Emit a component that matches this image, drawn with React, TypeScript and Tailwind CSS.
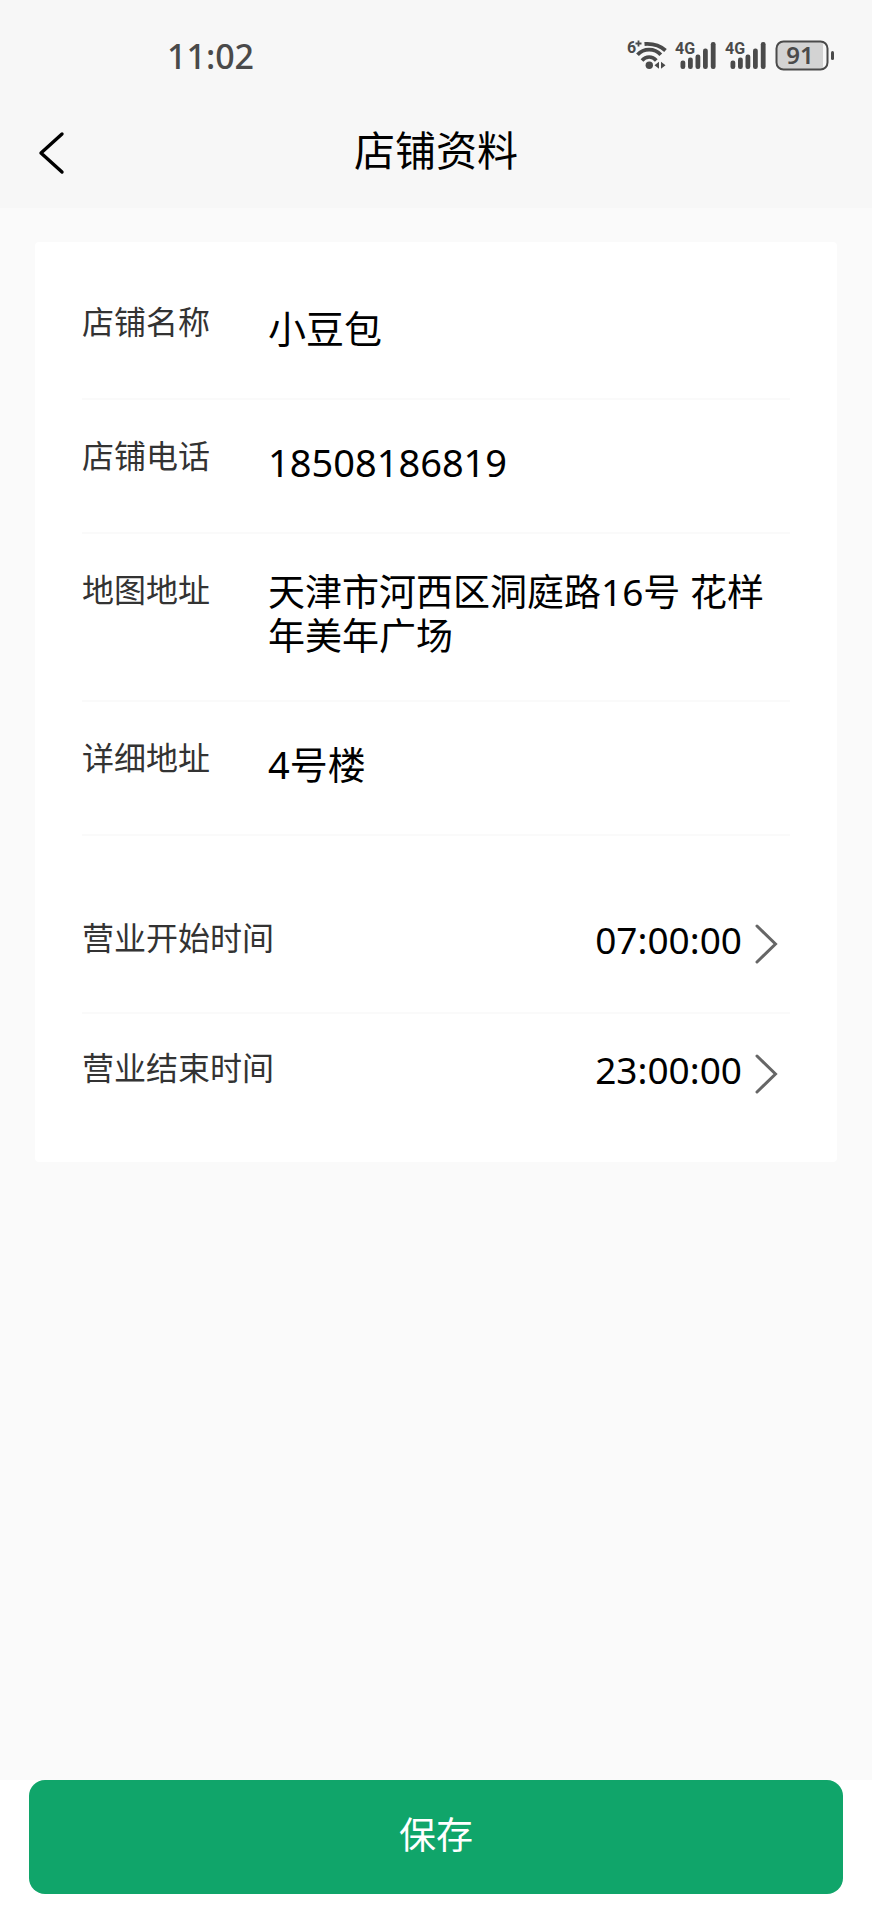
import { useState } from "react";

interface FieldProps {
  id: string;
  label: string;
  value: string;
  type?: string;
  onChange: (value: string) => void;
}

interface TimeRowProps {
  id: string;
  label: string;
  value: string;
  last?: boolean;
}

function WifiIcon() {
  return (
    <svg width="40" height="40" viewBox="0 -4 40 40" fill="none" className="overflow-visible" aria-hidden="true">
      <text x="0" y="13" fontSize="16" fontWeight="700" fill="#4a4a4a" fontFamily="Roboto, sans-serif">6</text>
      <path d="M8.500 3.500h6M11.500.5v6" stroke="#4a4a4a" strokeWidth="1.800" />
      <path d="M17.500 4c8-.6 15.500 1.500 21 6.500" stroke="#4a4a4a" strokeWidth="3.800" />
      <path d="M10.500 14.800c6.300-6.800 17-6.800 23.300 0" stroke="#4a4a4a" strokeWidth="3.800" />
      <path d="M15 20.500c4-4.600 10.300-4.600 14.300 0" stroke="#4a4a4a" strokeWidth="3.600" />
      <circle cx="22.300" cy="25.300" r="3.700" fill="#4a4a4a" />
      <path d="M32 21.800v7l-4.500-3.500zM34 21.800v7l4.500-3.500z" fill="#4a4a4a" />
    </svg>
  );
}

function SignalIcon() {
  return (
    <svg width="42" height="40" viewBox="0 -4 42 40" className="overflow-visible" aria-hidden="true">
      <text x="0" y="14" fontSize="16" fontWeight="700" fill="#4a4a4a" fontFamily="Roboto, sans-serif">4G</text>
      <g fill="#4a4a4a">
        <rect x="5.500" y="20.500" width="4.800" height="8.500" rx="2.200" />
        <rect x="13" y="17.500" width="4.800" height="11.500" rx="2.200" />
        <rect x="20.500" y="14.500" width="4.800" height="14.500" rx="2.200" />
        <rect x="28" y="8.500" width="4.800" height="20.500" rx="2.200" />
        <rect x="35.800" y="2" width="4.800" height="27" rx="2.200" />
      </g>
    </svg>
  );
}

function BatteryIcon() {
  return (
    <svg width="60" height="40" viewBox="0 -4 60 40" className="overflow-visible" aria-label="91%">
      <path d="M8 2h40v27H8a6 6 0 0 1-6-6V8a6 6 0 0 1 6-6z" fill="#d3d3d3" />
      <rect x="1.500" y="1.500" width="51" height="28" rx="7" fill="none" stroke="#4a4a4a" strokeWidth="2" />
      <rect x="56" y="11" width="3" height="9" rx="1.500" fill="#4a4a4a" />
      <text x="25" y="24" textAnchor="middle" fontSize="24" fontWeight="600" fill="#4a4a4a" fontFamily="Noto Sans, sans-serif">91</text>
    </svg>
  );
}

function StatusBar() {
  return (
    <div className="flex h-24 items-center justify-between pr-[37px] pl-[167px] pt-4">
      <span className="text-[34px] leading-10 font-medium text-[#4a4a4a]">11:02</span>
      <div className="flex items-center gap-2">
        <WifiIcon />
        <SignalIcon />
        <SignalIcon />
        <BatteryIcon />
      </div>
    </div>
  );
}

function Field({ id, label, value, type = "text", onChange }: FieldProps) {
  return (
    <div className="flex items-start border-b-2 border-[#fafafa] pt-9 pb-11">
      <label htmlFor={id} className="w-[186px] shrink-0 text-[32px] leading-10 text-[#333]">{label}</label>
      <input
        id={id}
        type={type}
        value={value}
        onChange={(e) => onChange(e.target.value)}
        className="h-[52px] min-w-0 flex-1 bg-transparent text-[38px] text-black outline-none"
      />
    </div>
  );
}

function TimeRow({ id, label, value, last }: TimeRowProps) {
  return (
    <div className={last ? "flex items-start justify-between pt-[34px] pb-[50px]" : "flex items-start justify-between border-b-2 border-[#fafafa] pt-[34px] pb-[50px]"}>
      <label htmlFor={id} className="text-[32px] leading-10 text-[#333]">{label}</label>
      <button id={id} type="button" className="flex items-center gap-3 pr-2.5 text-[37px] leading-[44px] text-black">
        {value}
        <svg width="26" height="44" viewBox="0 0 26 44" fill="none" className="overflow-visible" aria-hidden="true">
          <path d="M3 8l18.500 18L3 44" stroke="#666" strokeWidth="3" strokeLinecap="round" />
        </svg>
      </button>
    </div>
  );
}

export default function App() {
  const [name, setName] = useState("小豆包");
  const [phone, setPhone] = useState("18508186819");
  const [detail, setDetail] = useState("4号楼");

  return (
    <div className="flex min-h-screen flex-col bg-[#fafafa] font-['Noto_Sans','Noto_Sans_CJK_SC',sans-serif]">
      <header className="bg-[#f7f7f7]">
        <StatusBar />
        <div className="grid h-28 grid-cols-[1fr_auto_1fr] items-start pt-6">
          <button type="button" aria-label="返回" className="ml-9 justify-self-start pt-2">
            <svg width="32" height="50" viewBox="0 0 32 50" fill="none" aria-hidden="true">
              <path d="M26 6L5 25l21 19" stroke="#000" strokeWidth="3.400" strokeLinecap="round" strokeLinejoin="round" />
            </svg>
          </button>
          <h1 className="text-[41px] leading-[60px] text-black">店铺资料</h1>
        </div>
      </header>

      <main className="flex-1 px-[35px] pt-[34px] pb-10">
        <form id="shop-form" className="rounded bg-white px-[47px] pt-6 pb-5" onSubmit={(e) => e.preventDefault()}>
          <Field id="shop-name" label="店铺名称" value={name} onChange={setName} />
          <Field id="shop-phone" label="店铺电话" type="tel" value={phone} onChange={setPhone} />
          <div className="flex items-start border-b-2 border-[#fafafa] pt-9 pb-[42px]">
            <label htmlFor="map-address" className="w-[186px] shrink-0 text-[32px] leading-10 text-[#333]">地图地址</label>
            <button id="map-address" type="button" className="min-w-0 flex-1 text-left text-[37px] leading-[44px] text-black">
              天津市河西区洞庭路16号 花样年美年广场
            </button>
          </div>
          <Field id="detail-address" label="详细地址" value={detail} onChange={setDetail} />
          <div className="pt-12">
            <TimeRow id="open-time" label="营业开始时间" value="07:00:00" />
            <TimeRow id="close-time" label="营业结束时间" value="23:00:00" last />
          </div>
        </form>
      </main>

      <footer className="bg-white px-[29px] pb-[26px]">
        <button type="submit" form="shop-form" className="h-[114px] w-full rounded-2xl bg-[#10a56a] pb-1 text-[37px] text-white">
          保存
        </button>
      </footer>
    </div>
  );
}
